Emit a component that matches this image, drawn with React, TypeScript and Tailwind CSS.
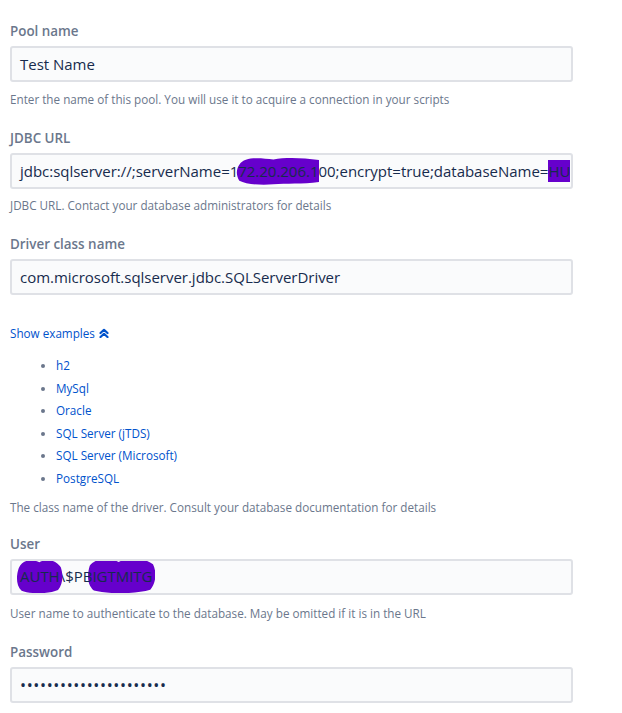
import React from "react";

const font = { fontFamily: '"Open Sans", "Noto Sans", sans-serif' };

function Label({ children }: { children: React.ReactNode }) {
  return <div className="text-[13.4px] leading-[20px] font-semibold text-[#6b778c]">{children}</div>;
}

function Help({ children, mt = "mt-[9px]" }: { children: React.ReactNode; mt?: string }) {
  return <div className={`${mt} text-[11.7px] leading-[16px] text-[#6b778c]`}>{children}</div>;
}

function Box({ children }: { children: React.ReactNode }) {
  return (
    <div className="relative mt-[5px] flex h-[36px] w-[563px] items-center overflow-hidden whitespace-nowrap rounded-[3px] border-2 border-[#dfe1e6] bg-[#fafbfc] px-[8px] text-[15px] tracking-[-0.02px] text-[#172b4d]">
      {children}
    </div>
  );
}

function Field({ value }: { value: string }) {
  return (
    <Box>
      <span>{value}</span>
    </Box>
  );
}

function Blob({
  children,
  path,
  cls,
}: {
  children: React.ReactNode;
  path: string;
  cls: string;
}) {
  return (
    <span className="relative">
      <span className={`absolute block ${cls}`}>
        <svg className="block h-full w-full" viewBox="0 0 100 100" preserveAspectRatio="none">
          <path d={path} fill="#6600cc" />
        </svg>
      </span>
      <span className="relative">{children}</span>
    </span>
  );
}

const wobble =
  "M4 30 C10 0 30 8 45 12 C60 4 80 6 100 14 L100 88 C80 96 60 92 45 96 C30 100 12 96 4 84 C0 66 0 46 4 30 Z";
const blobA =
  "M6 28 C14 4 34 2 50 12 C66 0 86 6 96 26 C102 50 100 74 90 90 C70 102 30 102 12 92 C0 78 0 50 6 28 Z";
const blobB =
  "M4 24 C12 2 34 0 46 14 C58 0 82 0 96 20 C102 44 100 72 92 90 C70 102 30 102 10 92 C0 76 0 48 4 24 Z";

const examples = ["h2", "MySql", "Oracle", "SQL Server (jTDS)", "SQL Server (Microsoft)", "PostgreSQL"];

export default function App() {
  return (
    <div className="min-h-[713px] w-[622px] bg-white pl-[10px] pt-[21px]" style={font}>
      <Label>Pool name</Label>
      <Field value="Test Name" />
      <Help>Enter the name of this pool. You will use it to acquire a connection in your scripts</Help>

      <div className="mt-[21px]">
        <Label>JDBC URL</Label>
        <Box>
          <span>jdbc:sqlserver://;serverName=1</span>
          <Blob path={wobble} cls="-left-[2px] -right-[1px] -top-[4px] -bottom-[3px]">
            72.20.206.1
          </Blob>
          <span>00;encrypt=true;databaseName=</span>
          <span className="bg-[#6600cc]">HU</span>
        </Box>
        <Help mt="mt-[8px]">JDBC URL. Contact your database administrators for details</Help>
      </div>

      <div className="mt-[21px]">
        <Label>Driver class name</Label>
        <Field value="com.microsoft.sqlserver.jdbc.SQLServerDriver" />
        <div className="mt-[30px] flex items-center gap-[4px] text-[11.7px] leading-[16px] text-[#0052cc]">
          <span>Show examples</span>
          <svg width="10" height="10" viewBox="0 0 10 10" fill="none" stroke="#0052cc" strokeWidth="2.2" strokeLinecap="round" strokeLinejoin="round">
            <path d="M1.5 5 L5 1.8 L8.5 5" />
            <path d="M1.5 9 L5 5.8 L8.5 9" />
          </svg>
        </div>
        <ul className="mt-[13px] list-disc pl-[46px] marker:text-[#6b778c]">
          {examples.map((e) => (
            <li key={e} className="text-[11.7px] leading-[22.6px] text-[#0052cc]">
              {e}
            </li>
          ))}
        </ul>
        <Help mt="mt-[9px]">The class name of the driver. Consult your database documentation for details</Help>
      </div>

      <div className="mt-[19px]">
        <Label>User</Label>
        <Box>
          <Blob path={blobA} cls="-left-[4px] -right-[3px] -top-[7px] -bottom-[6px]">
            AUTH
          </Blob>
          <span>\$P</span>
          <Blob path={blobB} cls="left-[4px] -right-[3px] -top-[8px] -bottom-[6px]">
            BIGTMITG
          </Blob>
        </Box>
        <Help mt="mt-[10px]">User name to authenticate to the database. May be omitted if it is in the URL</Help>
      </div>

      <div className="mt-[21px]">
        <Label>Password</Label>
        <Box>
          <input
            type="password"
            readOnly
            value="xxxxxxxxxxxxxxxxxxxxxx"
            className="w-full bg-transparent text-[16px] tracking-[0.65px] text-[#172b4d] outline-none"
            style={font}
          />
        </Box>
      </div>
    </div>
  );
}
